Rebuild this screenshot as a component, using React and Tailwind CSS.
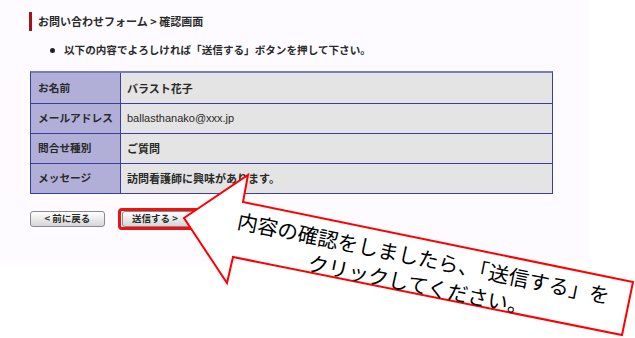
import React from "react";

const rows = [
  ["お名前", "バラスト花子", true],
  ["メールアドレス", "ballasthanako@xxx.jp", false],
  ["問合せ種別", "ご質問", true],
  ["メッセージ", "訪問看護師に興味があります。", true],
];

export default function App() {
  return (
    <div className="relative w-[635px] h-[338px] bg-white overflow-hidden text-[#2a2a2a] font-['Noto_Sans_CJK_JP','Liberation_Sans',sans-serif]">
      <div className="w-[589px] h-[262px] bg-[#fdfbff] pt-[12px] pl-[30px]">
        <div className="-ml-[1px] h-[19px] flex items-center border-l-[3px] border-[#a3141a] pl-[6px] text-[11px] font-bold leading-none">
          お問い合わせフォーム &gt; 確認画面
        </div>
        <div className="mt-[11px] h-[16px] flex items-center pl-[20px] text-[10.6px] font-bold leading-none">
          <span className="w-[5px] h-[5px] rounded-full bg-[#222] mr-[9px]" />
          以下の内容でよろしければ「送信する」ボタンを押して下さい。
        </div>
        <div className="mt-[13px] w-[523px] border border-[#3d3d9e] border-t-[2px] border-t-[#7a7ac4]">
          {rows.map(([label, value, bold], i) => (
            <div
              key={label}
              className={`flex h-[30px] ${i > 0 ? "border-t border-[#3d3d9e]" : ""}`}
            >
              <div className="w-[90px] bg-[#b1afd8] border-r border-[#3d3d9e] flex items-center pl-[7px] text-[10.7px] font-bold leading-none">
                {label}
              </div>
              <div
                className={`flex-1 bg-[#e4e4e4] flex items-center pl-[6px] text-[11px] leading-none ${
                  bold ? "font-bold" : "font-['Liberation_Sans',sans-serif]"
                }`}
              >
                {value}
              </div>
            </div>
          ))}
        </div>
        <div className="mt-[14px] flex items-center">
          <div className="w-[75px] h-[16px] rounded-[3px] border border-[#8a8a8a] bg-gradient-to-b from-white to-[#d6d6d6] flex items-center justify-center text-[9.5px] font-bold leading-none">
            &lt; 前に戻る
          </div>
          <div className="ml-[13px] h-[22px] w-[84px] rounded-[4px] border-[3px] border-[#ee1111] flex items-center pl-[1px]">
            <div className="w-[74px] h-[16px] rounded-[3px] border border-[#8a8a8a] bg-gradient-to-b from-white to-[#d6d6d6] flex items-center pl-[9px] text-[9.5px] font-bold leading-none">
              送信する &gt;
            </div>
          </div>
        </div>
      </div>

      <svg
        className="absolute left-0 top-0"
        width="635"
        height="338"
        viewBox="0 0 635 338"
      >
        <polygon
          points="184,218 248,175 243,202 633,282 622,335 233,257 227,283"
          fill="white"
          stroke="#ff0000"
          strokeWidth="2"
          strokeLinejoin="miter"
        />
      </svg>

      <div className="absolute left-[216px] top-[244px] w-[410px] h-[54px] rotate-[11.5deg] text-center text-[20.5px] leading-[27px] text-black">
        <div className="whitespace-nowrap">内容の確認をしましたら、「送信する」を</div>
        <div className="whitespace-nowrap">クリックしてください。</div>
      </div>
    </div>
  );
}
